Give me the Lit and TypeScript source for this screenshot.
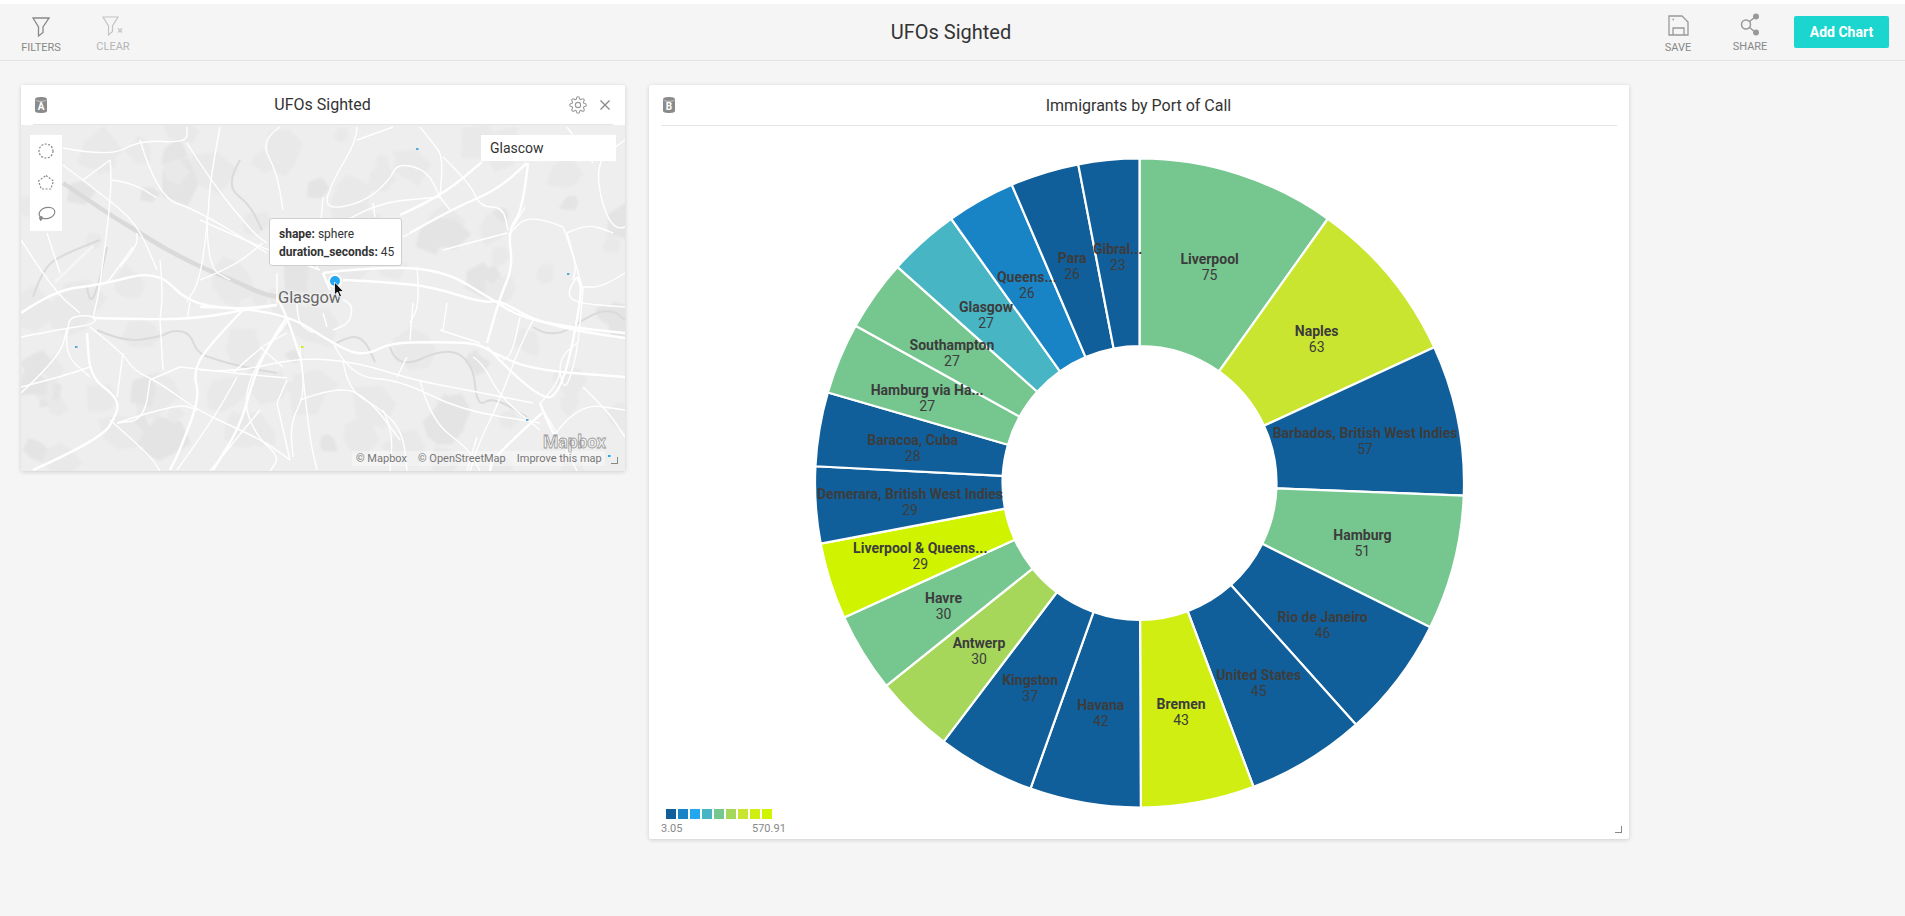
import { LitElement, css, html, svg } from 'lit';
import { customElement } from 'lit/decorators.js';

const BLUE = '#115f9a';
const GREEN = '#76c68f';
const LEGEND = ['#115f9a', '#1984c5', '#22a7f0', '#48b5c4', '#76c68f', '#a6d75b', '#c9e52f', '#d0ee11', '#d0f400'];

// clockwise from 12 o'clock
const PORTS: [string, number, string][] = [
  ['Liverpool', 75, GREEN],
  ['Naples', 63, '#c9e52f'],
  ['Barbados, British West Indies', 57, BLUE],
  ['Hamburg', 51, GREEN],
  ['Rio de Janeiro', 46, BLUE],
  ['United States', 45, BLUE],
  ['Bremen', 43, '#d0ee11'],
  ['Havana', 42, BLUE],
  ['Kingston', 37, BLUE],
  ['Antwerp', 30, '#a6d75b'],
  ['Havre', 30, GREEN],
  ['Liverpool & Queens...', 29, '#d0f400'],
  ['Demerara, British West Indies', 29, BLUE],
  ['Baracoa, Cuba', 28, BLUE],
  ['Hamburg via Ha...', 27, GREEN],
  ['Southampton', 27, GREEN],
  ['Glasgow', 27, '#48b5c4'],
  ['Queens...', 26, '#1984c5'],
  ['Para', 26, BLUE],
  ['Gibral...', 23, BLUE],
];

// map geometry, in page pixels (the map svg has a matching viewBox)
const MAJOR = [
  '343,280 387,282 433,287 483,303 500,300 533,320 583,332 625,338',
  '323,273 360,268 440,268 493,300 520,317 567,327 625,333',
  '200,307 277,307 343,350 367,355 390,343 433,342 477,343 493,353 533,370 625,377',
  '21,313 55,290 100,285 157,270 187,302 233,310 277,305',
  '93,318 160,320 207,317 243,310 277,305',
  '400,215 440,197 482,162',
  '410,233 450,210 497,190 527,163',
  '528,163 523,210 508,230 513,267 500,297 487,343',
  '487,347 540,403 563,390 583,290 577,277',
  '33,470 100,440 118,413 117,397 90,377 87,333',
  '243,310 207,347 193,373 200,397 180,450 170,470',
  '287,317 267,347 253,380 240,427 213,470',
  '540,403 553,437 570,450',
  '542,413 493,457 490,471',
  '277,297 287,316 300,357',
  '323,273 330,290',
];
const MINOR = [
  '63,165 100,193 137,223 157,270',
  '21,337 68,328 90,325 97,320 90,315 70,317 68,328',
  '90,327 123,353 133,370 160,383 197,410 240,430 267,443 290,460',
  '21,240 53,290 80,313',
  '110,160 113,180 100,287 93,318',
  '63,148 110,157 140,140 187,143 187,127',
  '140,140 157,197 197,210 267,253',
  '220,127 210,180 208,220 200,280 187,302',
  '187,143 210,180 253,233 267,243',
  '280,127 260,140 277,173 283,210',
  '160,320 163,370',
  '180,367 233,373 287,378',
  '21,393 60,357 67,328',
  '343,360 347,390 383,410 403,433 407,471',
  '290,318 257,360 243,403 257,437 280,457 270,471',
  '300,357 307,390 290,423 293,457',
  '333,343 350,377 400,380 460,410 540,423',
  '413,303 410,340',
  '447,303 443,330',
  '560,370 563,397 577,357 583,290',
  '440,197 450,210',
  '420,127 433,143 443,157 440,197',
  '443,157 470,183 480,207 503,207 508,230',
  '357,127 357,140 333,180 323,210 363,203 390,180 397,163 427,170 440,197',
  '357,140 393,127',
  '373,203 375,217',
  '563,227 530,213 508,235',
  '563,227 577,263 573,280',
  '625,227 610,233 593,163 625,140',
  '567,127 593,163',
  '443,250 507,233',
  '403,237 443,215',
  '47,233 60,273',
  '110,160 83,180',
  '112,180 133,183 157,198',
  '120,267 137,247 137,233',
  '107,283 133,247',
  '160,260 163,290 160,320',
  '190,302 187,320',
  '200,280 233,267 263,243',
  '68,328 63,353 90,377',
  '21,387 60,377 90,367',
  '123,353 117,397',
  '150,380 180,367',
  '147,400 150,380',
  '117,423 177,403 197,410',
  '147,400 143,420 117,423',
  '177,470 213,420 237,377',
  '233,373 260,347 287,333',
  '260,347 283,367',
  '277,403 287,380',
  '277,403 290,460',
  '300,347 303,377 310,440 317,470',
  '207,217 207,267 230,280',
  '200,220 267,250 320,270',
  '277,273 277,303',
  '317,270 323,197',
  '343,300 353,303 350,323 333,330',
  '297,303 297,323 313,333',
  '323,313 327,327',
  '200,370 233,373 300,357 360,363 413,380 467,390 533,403',
  '407,357 397,377',
  '540,403 560,383 560,357 577,343',
  '473,357 483,363 500,397 540,430',
  '520,317 513,353 503,360',
  '577,277 567,290 573,303 625,307',
  '625,273 603,287 583,287',
  '553,437 577,403 625,410',
  '583,387 607,410 625,437',
  '543,410 567,450 577,471',
  '383,410 393,430 390,471',
  '477,437 467,471',
  '260,410 233,443 210,471',
  '525,207 513,227',
  '567,233 587,223 613,233',
  '583,290 567,233',
  '417,267 420,303 410,323',
  '343,223 373,203 440,197',
  '533,320 520,345 500,400 480,440 470,471',
  '420,380 430,420 470,450 480,471',
  '300,400 340,385 370,400 400,440',
  '440,330 480,343',
  '110,420 150,455 160,471',
];
const RIVERS = [
  '63,183 107,213 140,233 167,250 207,270 233,280 260,293 277,297',
  '97,330 123,342 160,337 173,330 190,333 197,353 217,360 243,367 277,373',
  '33,297 43,267 67,253 100,240',
  '87,287 90,307 100,280 107,247',
  '390,347 397,370 447,347 473,363 477,407 493,397 527,417',
  '533,327 553,340 593,313 613,310 625,320',
  '240,160 225,185 250,205 262,230',
  '333,345 350,335 365,340 375,362',
];
const DOTS: [number, number, string][] = [
  [76, 347, '#5aa9d6'],
  [302, 347, '#d0ee11'],
  [417, 149, '#5aa9d6'],
  [568, 274, '#5aa9d6'],
  [527, 420, '#5aa9d6'],
  [609, 456, '#22a7f0'],
];

// land-use patches, scattered with a fixed seed so every render is the same
function makePatches() {
  let seed = 42;
  const rnd = () => {
    seed = (seed * 1664525 + 1013904223) % 4294967296;
    return seed / 4294967296;
  };
  const out: { d: string; fill: string }[] = [];
  for (let i = 0; i < 110; i++) {
    const cx = 21 + rnd() * 604;
    const cy = 125 + rnd() * 346;
    const r = 8 + rnd() * 18;
    const n = 5 + Math.floor(rnd() * 4);
    const pts: string[] = [];
    for (let k = 0; k < n; k++) {
      const a = (k / n) * Math.PI * 2;
      const rr = r * (0.55 + rnd() * 0.6);
      pts.push(`${(cx + Math.cos(a) * rr).toFixed(1)},${(cy + Math.sin(a) * rr).toFixed(1)}`);
    }
    out.push({ d: pts.join(' '), fill: i % 4 === 0 ? '#e4e4e4' : '#e9e9e9' });
  }
  return out;
}
const PATCHES = makePatches();

// rounds a polyline through the midpoints of its segments
function smooth(line: string) {
  const p = line.split(' ').map((s) => s.split(',').map(Number));
  let d = `M${p[0][0]} ${p[0][1]}`;
  for (let i = 1; i < p.length - 1; i++) {
    const mx = (p[i][0] + p[i + 1][0]) / 2;
    const my = (p[i][1] + p[i + 1][1]) / 2;
    d += `Q${p[i][0]} ${p[i][1]} ${mx} ${my}`;
  }
  const last = p[p.length - 1];
  return `${d}L${last[0]} ${last[1]}`;
}

const GEAR =
  'M19.4 15a1.65 1.65 0 0 0 .33 1.82l.06.06a2 2 0 0 1 0 2.83 2 2 0 0 1-2.83 0l-.06-.06a1.65 1.65 0 0 0-1.82-.33 1.65 1.65 0 0 0-1 1.51V21a2 2 0 0 1-2 2 2 2 0 0 1-2-2v-.09A1.65 1.65 0 0 0 9 19.4a1.65 1.65 0 0 0-1.82.33l-.06.06a2 2 0 0 1-2.83 0 2 2 0 0 1 0-2.83l.06-.06a1.65 1.65 0 0 0 .33-1.82 1.65 1.65 0 0 0-1.51-1H3a2 2 0 0 1-2-2 2 2 0 0 1 2-2h.09A1.65 1.65 0 0 0 4.6 9a1.65 1.65 0 0 0-.33-1.82l-.06-.06a2 2 0 0 1 0-2.83 2 2 0 0 1 2.83 0l.06.06a1.65 1.65 0 0 0 1.82.33H9a1.65 1.65 0 0 0 1-1.51V3a2 2 0 0 1 2-2 2 2 0 0 1 2 2v.09a1.65 1.65 0 0 0 1 1.51 1.65 1.65 0 0 0 1.82-.33l.06-.06a2 2 0 0 1 2.83 0 2 2 0 0 1 0 2.83l-.06.06a1.65 1.65 0 0 0-.33 1.82V9a1.65 1.65 0 0 0 1.51 1H21a2 2 0 0 1 2 2 2 2 0 0 1-2 2h-.09a1.65 1.65 0 0 0-1.51 1z';

const CX = 490.5;
const CY = 357;
const R_OUT = 324.5;
const R_IN = 137;
const R_LABEL = 230;

function polar(r: number, turn: number) {
  const a = turn * Math.PI * 2;
  return [CX + r * Math.sin(a), CY - r * Math.cos(a)];
}

function wedge(from: number, to: number) {
  const [x1, y1] = polar(R_OUT, from);
  const [x2, y2] = polar(R_OUT, to);
  const [x3, y3] = polar(R_IN, to);
  const [x4, y4] = polar(R_IN, from);
  return `M${x1} ${y1}A${R_OUT} ${R_OUT} 0 0 1 ${x2} ${y2}L${x3} ${y3}A${R_IN} ${R_IN} 0 0 0 ${x4} ${y4}Z`;
}

@customElement('app-root')
export class AppRoot extends LitElement {
  static styles = css`
    :host {
      display: block;
      min-height: 916px;
      background: #f5f5f5;
      font-family: Roboto, 'Liberation Sans', sans-serif;
      color: #333;
    }
    .top {
      display: grid;
      grid-template-columns: 1fr auto 1fr;
      height: 56px;
      border-top: 4px solid #fff;
      border-bottom: 1px solid #e2e2e2;
      padding: 0 19px 0 16px;
    }
    .top h1 {
      margin: 0;
      align-self: center;
      font-size: 20px;
      font-weight: 400;
      color: #333;
    }
    .tools {
      display: flex;
      gap: 32px;
      padding: 13px 0 0 5px;
    }
    .tools.right {
      justify-content: flex-end;
      align-items: flex-start;
      padding-left: 0;
      margin-right: -3px;
    }
    .tool {
      width: 40px;
      display: flex;
      flex-direction: column;
      align-items: center;
      gap: 4px;
      font-size: 11px;
      line-height: 14px;
      color: #888;
      white-space: nowrap;
    }
    .tool.off {
      color: #b4b4b4;
    }
    .tool svg {
      display: block;
    }
    .tool.off svg {
      margin-top: -1px;
    }
    .tool.save {
      gap: 5px;
    }
    .tool.save svg {
      margin-top: -2px;
    }
    .tool.share svg {
      margin-top: -4px;
    }
    .add {
      width: 95px;
      height: 32px;
      margin: -1px 0 0 -8px;
      border: 0;
      border-radius: 2px;
      background: #1bd6ce;
      color: #fff;
      font: 700 14px Roboto, sans-serif;
    }
    .board {
      display: flex;
      align-items: flex-start;
      gap: 24px;
      padding: 24px 21px;
    }
    .card {
      position: relative;
      background: #fff;
      border-radius: 2px;
      box-shadow: 0 1px 4px rgba(0, 0, 0, 0.16);
    }
    .card.map-card {
      width: 604px;
    }
    .card.chart-card {
      width: 980px;
    }
    .head {
      display: grid;
      grid-template-columns: 1fr auto 1fr;
      align-items: center;
      box-sizing: border-box;
      height: 40px;
      margin: 0 12px;
      padding: 0 3px 0 2px;
      border-bottom: 1px solid #e4e4e4;
      font-size: 16px;
      color: #333;
    }
    .chart-card .head {
      height: 41px;
    }
    .head .acts {
      display: flex;
      justify-content: flex-end;
      align-items: center;
      gap: 13px;
    }
    .head svg {
      display: block;
    }
    .map {
      position: relative;
      height: 346px;
      overflow: hidden;
      background: #eeeeee;
    }
    .map > svg {
      display: block;
    }
    .draw {
      position: absolute;
      left: 9px;
      top: 10px;
      width: 32px;
      height: 96px;
      background: #fff;
    }
    .search {
      position: absolute;
      left: 460px;
      top: 10px;
      width: 135px;
      height: 26px;
      box-sizing: border-box;
      padding-left: 9px;
      background: #fff;
      font-size: 14px;
      line-height: 27px;
      color: #333;
    }
    .tip {
      position: absolute;
      left: 248px;
      top: 93px;
      width: 133px;
      height: 48px;
      box-sizing: border-box;
      padding: 6px 9px;
      background: #fff;
      border: 1px solid #cfcfcf;
      border-radius: 3px;
      font-size: 12px;
      line-height: 18px;
      color: #333;
      white-space: nowrap;
    }
    .tip b {
      font-weight: 700;
    }
    .credit {
      position: absolute;
      left: 331px;
      top: 326px;
      display: flex;
      gap: 11px;
      padding: 0 3px 0 4px;
      height: 15px;
      line-height: 15px;
      background: rgba(255, 255, 255, 0.35);
      font-size: 11px;
      color: #777;
      white-space: nowrap;
    }
    .handle {
      position: absolute;
      width: 6px;
      height: 6px;
      border-right: 1.5px solid #888;
      border-bottom: 1.5px solid #888;
    }
    .map-card .handle {
      right: 7px;
      bottom: 7px;
    }
    .chart-card .handle {
      right: 7px;
      bottom: 6px;
    }
    .chart {
      display: block;
    }
    .chart .name {
      font: 700 14px Roboto, sans-serif;
      fill: #3c3c3c;
      text-anchor: middle;
    }
    .chart .val {
      font: 400 14px Roboto, sans-serif;
      fill: #3c3c3c;
      text-anchor: middle;
    }
    .chart .tick {
      font: 400 11px Roboto, sans-serif;
      fill: #888;
    }
  `;

  private _can(letter: string) {
    return html`<svg width="12" height="16" viewBox="0 0 12 16">
      <path d="M0 2.200C0 .9 2.700 0 6 0s6 .9 6 2.200V14c0 1.200-2.700 2-6 2s-6-.8-6-2z" fill="#8a8a8a" />
      <path d="M.5 3c1 .9 3 1.300 5.500 1.300S10.500 3.900 11.500 3" fill="none" stroke="#dcdcdc" stroke-width=".8" />
      <text x="6" y="13" text-anchor="middle" font-family="Roboto, sans-serif" font-size="10" font-weight="700" fill="#fff">${letter}</text>
    </svg>`;
  }

  private _toolbar() {
    return html`
      <div class="top">
        <div class="tools">
          <div class="tool">
            <svg width="18" height="20" viewBox="0 0 18 20" fill="none" stroke="#888" stroke-width="1.300">
              <path d="M1 1h16l-6 9v5.500L6.500 19v-9z" />
            </svg>
            FILTERS
          </div>
          <div class="tool off">
            <svg width="22" height="20" viewBox="0 0 22 20" fill="none" stroke="#c4c4c4" stroke-width="1.200">
              <path d="M1 1h15l-5.500 9v5.500L6.500 19v-9z" />
              <path d="M16 12.500l4 4M20 12.500l-4 4" />
            </svg>
            CLEAR
          </div>
        </div>
        <h1>UFOs Sighted</h1>
        <div class="tools right">
          <div class="tool save">
            <svg width="21" height="21" viewBox="0 0 21 21" fill="none" stroke="#999" stroke-width="1.300">
              <path d="M1 1h13l6 6v13H1z" />
              <path d="M5 20v-7h11v7M4.500 4.500h1.500" />
            </svg>
            SAVE
          </div>
          <div class="tool share">
            <svg width="20" height="23" viewBox="0 0 20 23" fill="none" stroke="#999" stroke-width="1.500">
              <path d="M9 9l6-5M9 14l6 5" />
              <circle cx="6" cy="11.500" r="4.500" />
              <circle cx="16" cy="3.500" r="3" fill="#999" stroke="none" />
              <circle cx="16" cy="19.500" r="3" fill="#999" stroke="none" />
            </svg>
            SHARE
          </div>
          <button class="add">Add Chart</button>
        </div>
      </div>
    `;
  }

  private _mapSvg() {
    return html`<svg width="604" height="346" viewBox="21 125 604 346">
      <defs>
        <filter id="soft" x="0" y="0" width="100%" height="100%"><feGaussianBlur stdDeviation="0.8" /></filter>
      </defs>
      <g filter="url(#soft)">${PATCHES.map((p) => svg`<polygon points=${p.d} fill=${p.fill} />`)}</g>
      ${RIVERS.map(
        (l, i) =>
          svg`<path d=${smooth(l)} fill="none" stroke="#dadada" stroke-width=${i === 0 ? 4.5 : 2} stroke-linejoin="round" />`,
      )}
      <path d="M55 282L93 246" stroke="#f5f5f5" stroke-width="3" />
      ${MINOR.map((l) => svg`<path d=${smooth(l)} fill="none" stroke="#fff" stroke-width="1.400" />`)}
      ${MAJOR.map((l) => svg`<path d=${smooth(l)} fill="none" stroke="#fff" stroke-width="2.400" />`)}
      ${DOTS.map(([x, y, c]) => svg`<rect x=${x - 1} y=${y - 1} width="2.500" height="2" fill=${c} />`)}
      <text x="278" y="303" font-family="Roboto, sans-serif" font-size="16.500" letter-spacing="-.1" fill="#666" stroke="#f2f2f2" stroke-width="2" paint-order="stroke">Glasgow</text>
      <circle cx="335" cy="281" r="7" fill="#fff" />
      <circle cx="335" cy="281" r="5" fill="#22a7f0" />
      <path d="M334.500 282v13l3-3 2 5 2-1-2-4.500h4z" fill="#111" stroke="#fff" stroke-width=".8" />
      <text x="543" y="448" font-family="Roboto, sans-serif" font-size="17.500" font-weight="700" fill="#f4f4f4" stroke="#9a9a9a" stroke-width=".8">Mapbox</text>
    </svg>`;
  }

  private _drawTools() {
    return html`<svg class="draw" viewBox="0 0 32 96" fill="none" stroke="#888" stroke-width="1.200">
      <circle cx="16" cy="16" r="7" stroke-dasharray="2 1.500" />
      <path d="M16 40.500l7.500 5.500-2.800 8h-9.400L8.500 46z" stroke-dasharray="2 1.500" />
      <ellipse cx="17" cy="78" rx="8" ry="5.500" transform="rotate(-15 17 78)" />
      <path d="M10.500 82c-.8 1.500 0 3 .5 4" />
      <circle cx="11" cy="83" r="1.300" fill="#888" />
    </svg>`;
  }

  private _donut() {
    const total = PORTS.reduce((sum, p) => sum + p[1], 0);
    let acc = 0;
    const slices = PORTS.map(([name, value, color]) => {
      const from = acc / total;
      acc += value;
      return { name, value, color, from, to: acc / total };
    });
    return html`<svg class="chart" width="980" height="713" viewBox="0 0 980 713">
      ${slices.map(
        (s) => svg`<path d=${wedge(s.from, s.to)} fill=${s.color} stroke="#fff" stroke-width="2.200" stroke-linejoin="round" />`,
      )}
      ${slices.map((s) => {
        const [x, y] = polar(R_LABEL, (s.from + s.to) / 2);
        return svg`<text class="name" x=${x} y=${y}>${s.name}</text><text class="val" x=${x} y=${y + 16}>${s.value}</text>`;
      })}
      ${LEGEND.map((c, i) => svg`<rect x=${17 + i * 12} y="683" width="10" height="10" fill=${c} />`)}
      <text class="tick" x="12" y="706">3.05</text>
      <text class="tick" x="103" y="706">570.91</text>
    </svg>`;
  }

  render() {
    return html`
      ${this._toolbar()}
      <div class="board">
        <section class="card map-card">
          <div class="head">
            ${this._can('A')}
            <span>UFOs Sighted</span>
            <div class="acts">
              <svg width="18" height="18" viewBox="0 0 24 24" fill="none" stroke="#999" stroke-width="1.500">
                <circle cx="12" cy="12" r="3.500" />
                <path d=${GEAR} />
              </svg>
              <svg width="10" height="10" viewBox="0 0 10 10" stroke="#888" stroke-width="1.300">
                <path d="M.5.5l9 9M9.500.5l-9 9" />
              </svg>
            </div>
          </div>
          <div class="map">
            ${this._mapSvg()} ${this._drawTools()}
            <div class="search">Glascow</div>
            <div class="tip"><b>shape:</b> sphere<br /><b>duration_seconds:</b> 45</div>
            <div class="credit"><span>© Mapbox</span><span>© OpenStreetMap</span><span>Improve this map</span></div>
          </div>
          <div class="handle"></div>
        </section>
        <section class="card chart-card">
          <div class="head">
            ${this._can('B')}
            <span>Immigrants by Port of Call</span>
            <div class="acts"></div>
          </div>
          ${this._donut()}
          <div class="handle"></div>
        </section>
      </div>
    `;
  }
}
